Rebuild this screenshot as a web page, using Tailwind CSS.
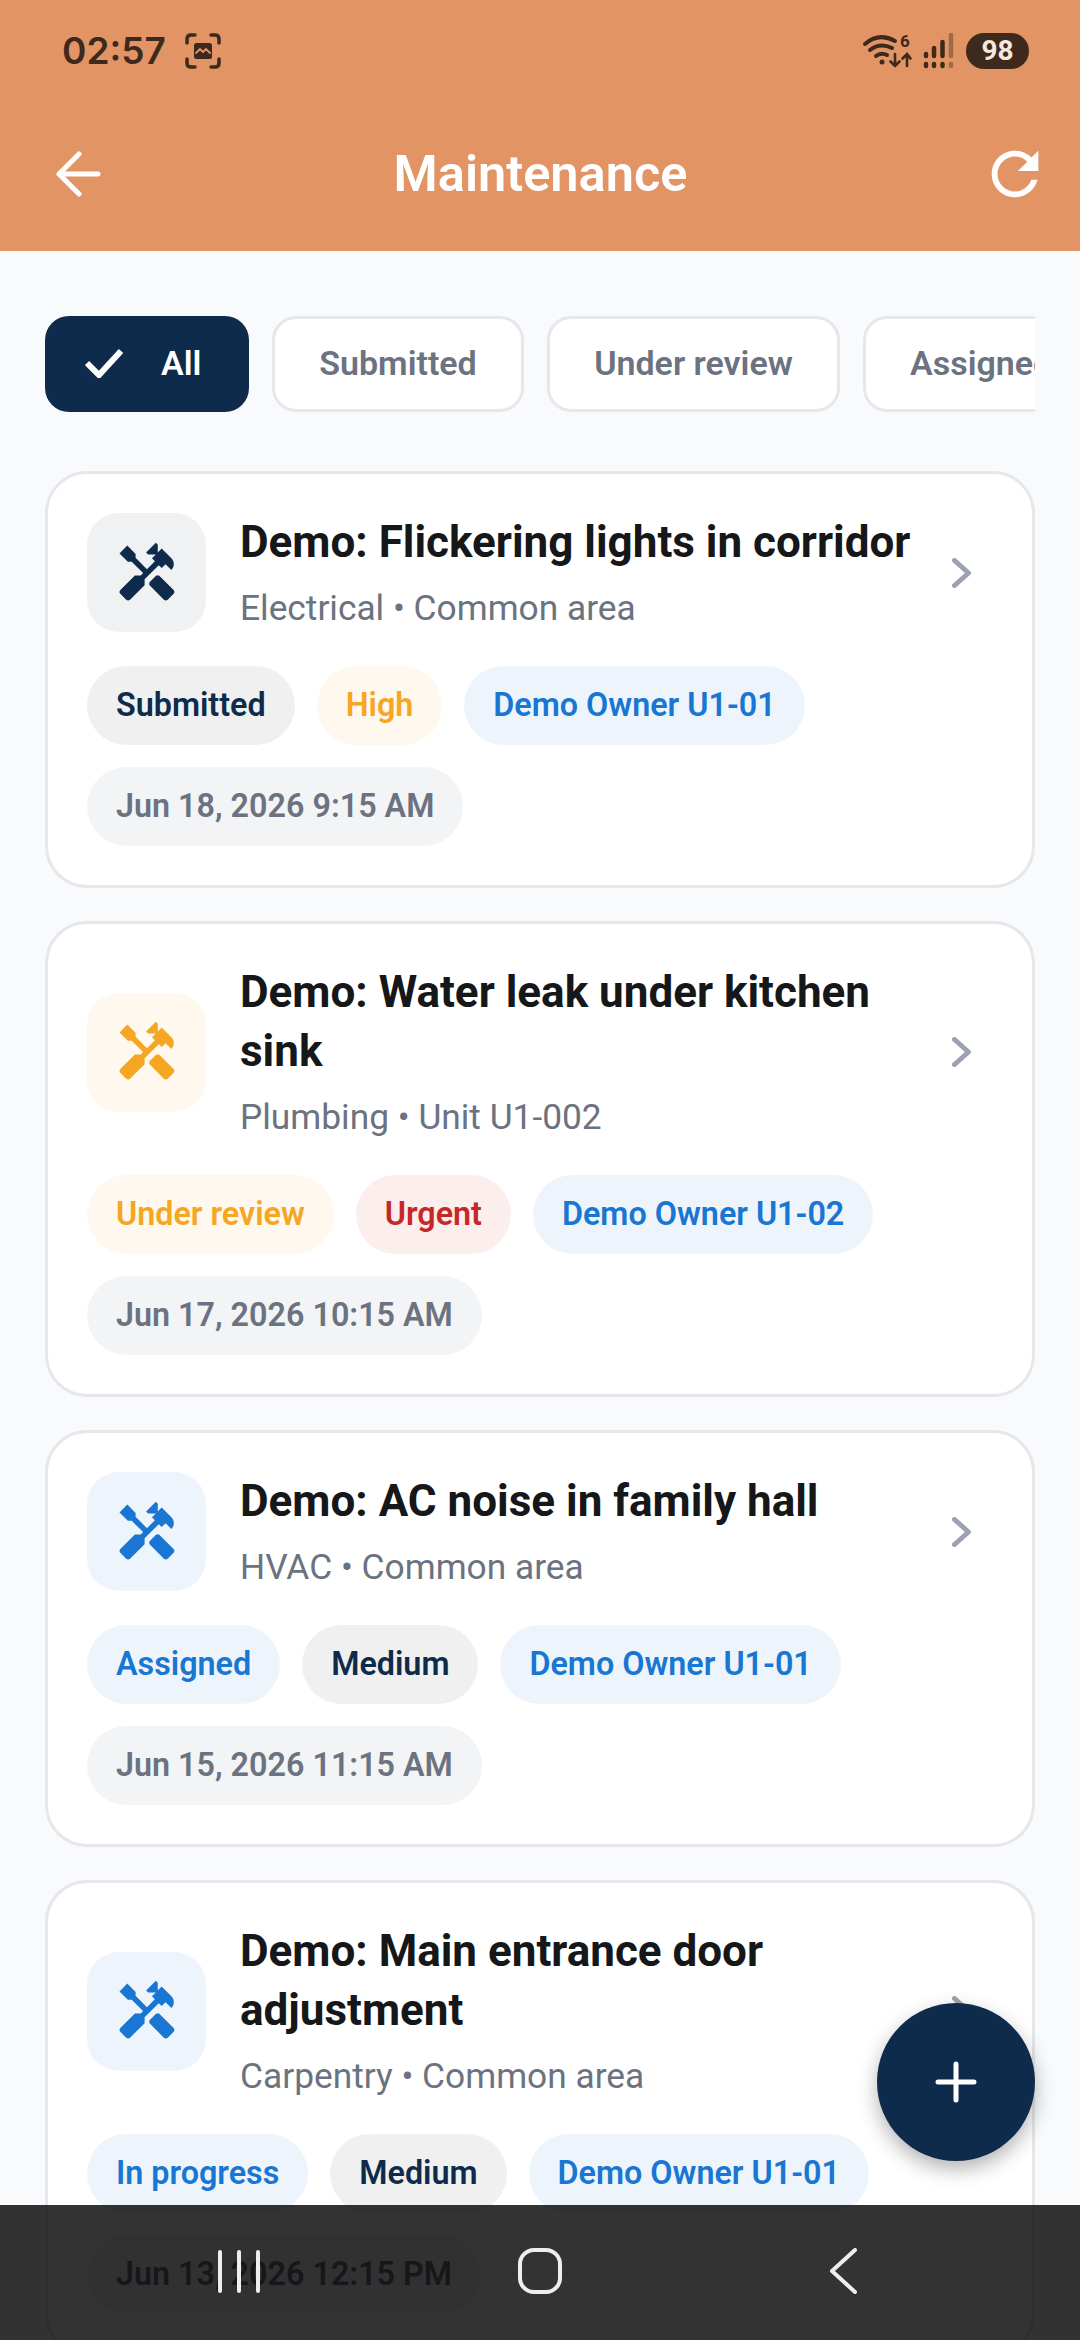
<!DOCTYPE html>
<html lang="en">
<head>
    <meta charset="UTF-8">
    <meta name="viewport" content="width=device-width, initial-scale=1.0">
    <title>Maintenance</title>
    <script src="https://cdn.jsdelivr.net/npm/@tailwindcss/browser@4"></script>
</head>
<body>
    <svg class="hidden">
        <symbol id="handyman" viewBox="0 0 24 24">
            <path fill="currentColor" d="M21.67,18.17l-5.3-5.3h-0.99l-2.54,2.54v0.99l5.3,5.3c0.39,0.39,1.02,0.39,1.41,0l2.12-2.12C22.06,19.2,22.06,18.56,21.67,18.17z"/>
            <path fill="currentColor" d="M17.34,10.19l1.41-1.41l2.12,2.12c1.17-1.17,1.17-3.07,0-4.24l-3.54-3.54l-1.41,1.41V1.71L15.22,1l-3.54,3.54l0.71,0.71h2.83l-1.41,1.41l1.06,1.06l-2.89,2.89L7.85,6.48V5.06L4.83,2.04L2,4.87l3.03,3.03h1.41l4.13,4.13l-0.85,0.85H7.6l-5.3,5.3c-0.39,0.39-0.39,1.02,0,1.41l2.12,2.12c0.39,0.39,1.02,0.39,1.41,0l5.3-5.3v-2.12l5.15-5.15L17.34,10.19z"/>
        </symbol>
        <symbol id="chevron" viewBox="0 0 20 30">
            <path d="M2.5 2.5 L16.5 15 L2.5 27.5" fill="none" stroke="currentColor" stroke-width="5" stroke-linecap="round" stroke-linejoin="round"/>
        </symbol>
    </svg>

    <div class="relative w-[1080px] h-[2340px] overflow-hidden bg-[#f9fafb] font-['Roboto',sans-serif]">

        <!-- header -->
        <header class="h-[251px] bg-[#e29465]">
            <div class="h-[102px] pl-[62px] pr-[51px] flex items-center justify-between text-[#3d2a1c]">
                <div class="flex items-center gap-[19px]">
                    <span class="text-[37px] font-semibold font-['Inter',sans-serif]">02:57</span>
                    <svg class="w-[36px] h-[36px]" viewBox="0 0 36 36" fill="none" stroke="currentColor" stroke-width="3.5" stroke-linecap="round">
                        <path d="M2 10 V6 Q2 2 6 2 H10 M26 2 H30 Q34 2 34 6 V10 M34 26 V30 Q34 34 30 34 H26 M10 34 H6 Q2 34 2 30 V26"/>
                        <rect x="9" y="10" width="18" height="16" rx="2.5" fill="currentColor" stroke="none"/>
                        <path d="M11 20 L15 16 L18 19 L21 16 L25 20" stroke="#e29465" stroke-width="1.8"/>
                    </svg>
                </div>
                <div class="flex items-center gap-[12px]">
                    <svg class="w-[48px] h-[36px] overflow-visible" viewBox="0 0 48 36" fill="none" stroke="currentColor" stroke-linecap="round">
                        <path d="M2 11 Q16 -1 32 8" stroke-width="4"/>
                        <path d="M7 17 Q17 9 29 15" stroke-width="4"/>
                        <path d="M13 23 Q18 19 24 22" stroke-width="4"/>
                        <circle cx="19" cy="29" r="2.5" fill="currentColor" stroke="none"/>
                        <path d="M32 21 V33 M27.5 28.5 L32 33 L36.5 28.5 M44 33 V21 M39.500 25.5 L44 21 L47.500 25.5" stroke-width="2.6"/>
                        <text x="37" y="14" font-size="17" font-weight="700" fill="currentColor" stroke="none" font-family="Roboto, sans-serif">6</text>
                    </svg>
                    <svg class="w-[31px] h-[36px]" viewBox="0 0 31 36" stroke-linecap="round" fill="none" stroke="currentColor" stroke-width="4.5">
                        <path d="M3 21 V23 M3 31 V33 M11 15 V23 M11 31 V33 M19.500 9 V23 M19.500 31 V33"/>
                        <path d="M28 2 V23 M28 31 V33" stroke-opacity="0.4"/>
                    </svg>
                    <span class="w-[63px] h-[36px] rounded-full bg-[#3d2a1c] text-[#f6e8de] text-[28px] font-bold flex items-center justify-center">98</span>
                </div>
            </div>
            <div class="h-[144px] pl-[55px] pr-[30px] flex items-center">
                <svg class="shrink-0 w-[46px] h-[46px]" viewBox="0 0 46 46" fill="none" stroke="white" stroke-width="5" stroke-linecap="round" stroke-linejoin="round">
                    <path d="M43 23 H4 M24 3 L4 23 L24 43"/>
                </svg>
                <h1 class="flex-1 text-center text-[50.500px] font-semibold text-white">Maintenance</h1>
                <svg class="shrink-0 w-[70px] h-[70px]" viewBox="0 0 24 24" fill="white">
                    <path d="M17.65 6.35A7.958 7.958 0 0 0 12 4c-4.42 0-7.99 3.58-7.99 8s3.57 8 7.99 8c3.73 0 6.84-2.55 7.73-6h-2.08A5.99 5.99 0 0 1 12 18c-3.31 0-6-2.69-6-6s2.69-6 6-6c1.66 0 3.14.69 4.22 1.78L13 11h7V4l-2.35 2.35z"/>
                </svg>
            </div>
        </header>

        <main class="px-[45px]">
            <!-- filter chips -->
            <div class="mt-[65px] flex gap-[23px] overflow-hidden text-[34px] font-semibold text-[#6b7280]">
                <div class="shrink-0 w-[204px] h-[96px] pl-[40px] pb-[2px] rounded-[24px] bg-[#0f2b4c] text-white flex items-center gap-[38px]">
                    <svg class="w-[38px] h-[30px]" viewBox="0 0 38 30" fill="none" stroke="white" stroke-width="6">
                        <path d="M2 15 L14 27 L36 3"/>
                    </svg>
                    <span>All</span>
                </div>
                <div class="shrink-0 w-[252px] h-[96px] pb-[2px] rounded-[24px] bg-white border-[3px] border-[#e5e7eb] flex items-center justify-center">Submitted</div>
                <div class="shrink-0 w-[293px] h-[96px] pb-[2px] rounded-[24px] bg-white border-[3px] border-[#e5e7eb] flex items-center justify-center">Under review</div>
                <div class="shrink-0 w-[230px] h-[96px] pl-[44px] pb-[2px] rounded-[24px] bg-white border-[3px] border-[#e5e7eb] flex items-center">Assigned</div>
            </div>

            <!-- request cards -->
            <div class="mt-[59px] flex flex-col gap-[33px]">

                <article class="bg-white border-[3px] border-[#e5e7eb] rounded-[42px] p-[39px]">
                    <div class="flex items-center">
                        <div class="shrink-0 w-[119px] h-[119px] rounded-[32px] bg-[#f0f1f2] text-[#0f2b4c] flex items-center justify-center">
                            <svg class="w-[66px] h-[66px]"><use href="#handyman"/></svg>
                        </div>
                        <div class="flex-1 ml-[34px]">
                            <h2 class="text-[44px] leading-[59px] font-bold text-[#151719]">Demo: Flickering lights in corridor</h2>
                            <p class="mt-[12px] text-[35.300px] leading-[48px] text-[#6b7280]">Electrical • Common area</p>
                        </div>
                        <svg class="shrink-0 w-[20px] h-[30px] text-[#9ca3af] mr-[21px]"><use href="#chevron"/></svg>
                    </div>
                    <div class="mt-[34px] flex flex-wrap gap-[22px] text-[32.300px] font-semibold">
                        <span class="h-[79px] px-[29px] rounded-full flex items-center bg-[#f0f0f0] text-[#0f2b4c]">Submitted</span>
                        <span class="h-[79px] px-[29px] rounded-full flex items-center bg-[#fff8ee] text-[#f5a623]">High</span>
                        <span class="h-[79px] px-[29px] rounded-full flex items-center bg-[#edf4fc] text-[#1976d2]">Demo Owner U1-01</span>
                        <span class="h-[79px] px-[29px] rounded-full flex items-center bg-[#f3f4f6] text-[#6b7280]">Jun 18, 2026 9:15 AM</span>
                    </div>
                </article>

                <article class="bg-white border-[3px] border-[#e5e7eb] rounded-[42px] p-[39px]">
                    <div class="flex items-center">
                        <div class="shrink-0 w-[119px] h-[119px] rounded-[32px] bg-[#fff8ee] text-[#f5a623] flex items-center justify-center">
                            <svg class="w-[66px] h-[66px]"><use href="#handyman"/></svg>
                        </div>
                        <div class="flex-1 ml-[34px]">
                            <h2 class="text-[44px] leading-[59px] font-bold text-[#151719]">Demo: Water leak under kitchen sink</h2>
                            <p class="mt-[12px] text-[35.300px] leading-[48px] text-[#6b7280]">Plumbing • Unit U1-002</p>
                        </div>
                        <svg class="shrink-0 w-[20px] h-[30px] text-[#9ca3af] mr-[21px]"><use href="#chevron"/></svg>
                    </div>
                    <div class="mt-[34px] flex flex-wrap gap-[22px] text-[32.300px] font-semibold">
                        <span class="h-[79px] px-[29px] rounded-full flex items-center bg-[#fff8ee] text-[#f5a623]">Under review</span>
                        <span class="h-[79px] px-[29px] rounded-full flex items-center bg-[#fdeeee] text-[#c62828]">Urgent</span>
                        <span class="h-[79px] px-[29px] rounded-full flex items-center bg-[#edf4fc] text-[#1976d2]">Demo Owner U1-02</span>
                        <span class="h-[79px] px-[29px] rounded-full flex items-center bg-[#f3f4f6] text-[#6b7280]">Jun 17, 2026 10:15 AM</span>
                    </div>
                </article>

                <article class="bg-white border-[3px] border-[#e5e7eb] rounded-[42px] p-[39px]">
                    <div class="flex items-center">
                        <div class="shrink-0 w-[119px] h-[119px] rounded-[32px] bg-[#edf4fc] text-[#1976d2] flex items-center justify-center">
                            <svg class="w-[66px] h-[66px]"><use href="#handyman"/></svg>
                        </div>
                        <div class="flex-1 ml-[34px]">
                            <h2 class="text-[44px] leading-[59px] font-bold text-[#151719]">Demo: AC noise in family hall</h2>
                            <p class="mt-[12px] text-[35.300px] leading-[48px] text-[#6b7280]">HVAC • Common area</p>
                        </div>
                        <svg class="shrink-0 w-[20px] h-[30px] text-[#9ca3af] mr-[21px]"><use href="#chevron"/></svg>
                    </div>
                    <div class="mt-[34px] flex flex-wrap gap-[22px] text-[32.300px] font-semibold">
                        <span class="h-[79px] px-[29px] rounded-full flex items-center bg-[#edf4fc] text-[#1976d2]">Assigned</span>
                        <span class="h-[79px] px-[29px] rounded-full flex items-center bg-[#f0f0f0] text-[#0f2b4c]">Medium</span>
                        <span class="h-[79px] px-[29px] rounded-full flex items-center bg-[#edf4fc] text-[#1976d2]">Demo Owner U1-01</span>
                        <span class="h-[79px] px-[29px] rounded-full flex items-center bg-[#f3f4f6] text-[#6b7280]">Jun 15, 2026 11:15 AM</span>
                    </div>
                </article>

                <article class="bg-white border-[3px] border-[#e5e7eb] rounded-[42px] p-[39px]">
                    <div class="flex items-center">
                        <div class="shrink-0 w-[119px] h-[119px] rounded-[32px] bg-[#edf4fc] text-[#1976d2] flex items-center justify-center">
                            <svg class="w-[66px] h-[66px]"><use href="#handyman"/></svg>
                        </div>
                        <div class="flex-1 ml-[34px]">
                            <h2 class="text-[44px] leading-[59px] font-bold text-[#151719]">Demo: Main entrance door adjustment</h2>
                            <p class="mt-[12px] text-[35.300px] leading-[48px] text-[#6b7280]">Carpentry • Common area</p>
                        </div>
                        <svg class="shrink-0 w-[20px] h-[30px] text-[#9ca3af] mr-[21px]"><use href="#chevron"/></svg>
                    </div>
                    <div class="mt-[34px] flex flex-wrap gap-[22px] text-[32.300px] font-semibold">
                        <span class="h-[79px] px-[29px] rounded-full flex items-center bg-[#edf4fc] text-[#1976d2]">In progress</span>
                        <span class="h-[79px] px-[29px] rounded-full flex items-center bg-[#f0f0f0] text-[#0f2b4c]">Medium</span>
                        <span class="h-[79px] px-[29px] rounded-full flex items-center bg-[#edf4fc] text-[#1976d2]">Demo Owner U1-01</span>
                        <span class="h-[79px] px-[29px] rounded-full flex items-center bg-[#f3f4f6] text-[#6b7280]">Jun 13, 2026 12:15 PM</span>
                    </div>
                </article>
            </div>
        </main>

        <!-- add button -->
        <button class="absolute left-[877px] top-[2003px] w-[158px] h-[158px] rounded-full bg-[#0f2b4c] shadow-[0_8px_20px_rgba(0,0,0,0.3)] flex items-center justify-center">
            <svg class="w-[42px] h-[42px]" viewBox="0 0 42 42" stroke="white" stroke-width="5" stroke-linecap="round">
                <path d="M21 3 V39 M3 21 H39"/>
            </svg>
        </button>

        <!-- system navigation bar, translucent over the page -->
        <nav class="absolute left-0 right-0 bottom-0 h-[135px] bg-black/80">
            <div class="absolute left-[218px] top-[45px] flex gap-[15px]">
                <span class="w-[4px] h-[43px] rounded-full bg-[#eeeeee]"></span>
                <span class="w-[4px] h-[43px] rounded-full bg-[#eeeeee]"></span>
                <span class="w-[4px] h-[43px] rounded-full bg-[#eeeeee]"></span>
            </div>
            <div class="absolute left-[518px] top-[43px] w-[44px] h-[46px] rounded-[16px] border-[4px] border-[#eeeeee]"></div>
            <svg class="absolute left-[827px] top-[43px] w-[32px] h-[46px]" viewBox="0 0 32 46" fill="none" stroke="#eeeeee" stroke-width="4" stroke-linecap="round" stroke-linejoin="round">
                <path d="M28 2 L5 23 L28 44"/>
            </svg>
        </nav>
    </div>
</body>
</html>
